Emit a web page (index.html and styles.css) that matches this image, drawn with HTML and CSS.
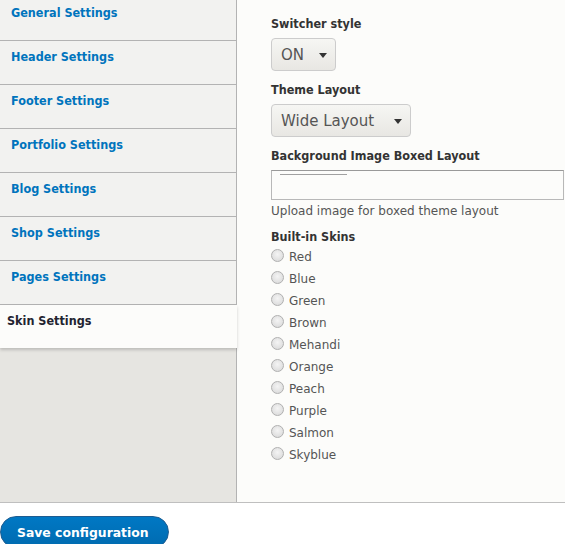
FILE: index.html
```html
<!DOCTYPE html>
<html>
<head>
<meta charset="utf-8">
<link rel="stylesheet" href="styles.css">
</head>
<body>
<div class="vt">
  <ul class="tabs">
    <li class="tab"><a>General Settings</a></li>
    <li class="tab"><a>Header Settings</a></li>
    <li class="tab"><a>Footer Settings</a></li>
    <li class="tab"><a>Portfolio Settings</a></li>
    <li class="tab"><a>Blog Settings</a></li>
    <li class="tab"><a>Shop Settings</a></li>
    <li class="tab"><a>Pages Settings</a></li>
    <li class="tab selected"><a>Skin Settings</a></li>
  </ul>
  <div class="panel">
    <div class="item">
      <label class="lbl">Switcher style</label>
      <div class="select sel-on"><span>ON</span><i class="caret"></i></div>
    </div>
    <div class="item">
      <label class="lbl">Theme Layout</label>
      <div class="select sel-wide"><span>Wide Layout</span><i class="caret"></i></div>
    </div>
    <div class="item">
      <label class="lbl">Background Image Boxed Layout</label>
      <div class="file"><span class="fline"></span></div>
      <div class="desc">Upload image for boxed theme layout</div>
    </div>
    <div class="item">
      <label class="lbl lbl-tight">Built-in Skins</label>
      <ul class="radios">
        <li><span class="radio"></span>Red</li>
        <li><span class="radio"></span>Blue</li>
        <li><span class="radio"></span>Green</li>
        <li><span class="radio"></span>Brown</li>
        <li><span class="radio"></span>Mehandi</li>
        <li><span class="radio"></span>Orange</li>
        <li><span class="radio"></span>Peach</li>
        <li><span class="radio"></span>Purple</li>
        <li><span class="radio"></span>Salmon</li>
        <li><span class="radio"></span>Skyblue</li>
      </ul>
    </div>
  </div>
</div>
<div class="actions">
  <button class="btn">Save configuration</button>
</div>
</body>
</html>
```

FILE: styles.css
```css
html, body {
  margin: 0;
  padding: 0;
  background: #ffffff;
  font-family: "DejaVu Sans", "Liberation Sans", sans-serif;
  overflow: hidden;
}
.vt {
  display: flex;
  margin-top: -3px;
  height: 506px;
  border-bottom: 1px solid #bfbfbf;
  box-sizing: border-box;
}
.tabs {
  list-style: none;
  margin: 0;
  padding: 0;
  width: 236px;
  flex: none;
  background: #e6e5e1;
  border-right: 1px solid #b3b3b3;
}
.tab {
  height: 43px;
  border-bottom: 1px solid #b3b3b3;
  background: #f2f2f0;
  box-sizing: content-box;
}
.tab a {
  display: block;
  padding: 8px 11px 0;
  font-family: "DejaVu Sans Condensed", "DejaVu Sans", sans-serif;
  font-size: 12.5px;
  font-weight: bold;
  line-height: 16px;
  color: #0074bd;
}
.tab.selected {
  background: #fcfcfa;
  border-bottom: none;
  margin-right: -1px;
  position: relative;
  z-index: 1;
  box-shadow: 0 2px 3px rgba(0,0,0,0.18);
}
.tab.selected a {
  color: #222330;
  padding-left: 7px;
}
.panel {
  flex: 1;
  background: #fcfcfa;
  padding: 19px 0 0 34px;
}
.item {
  margin-bottom: 11px;
}
.lbl {
  display: block;
  font-family: "DejaVu Sans Condensed", "DejaVu Sans", sans-serif;
  font-size: 12.5px;
  font-weight: bold;
  color: #333333;
  line-height: 16px;
  margin-bottom: 6px;
}
.lbl-tight {
  margin-bottom: 1px;
}
.select {
  display: inline-flex;
  align-items: center;
  justify-content: space-between;
  box-sizing: border-box;
  height: 33px;
  border: 1px solid #cccccc;
  border-radius: 4px;
  background: linear-gradient(#f6f6f3, #e8e7e3);
  color: #555555;
  font-size: 15px;
  padding: 0 8px 0 9px;
}
.sel-on { width: 65px; }
.sel-wide { width: 140px; }
.caret {
  width: 0;
  height: 0;
  border-left: 4px solid transparent;
  border-right: 4px solid transparent;
  border-top: 5px solid #333;
  margin-top: 2px;
}
.file {
  width: 293px;
  height: 30px;
  box-sizing: border-box;
  border: 1px solid #b8b8b8;
  border-top-color: #999;
  background: #fcfcfa;
  padding: 3px 0 0 8px;
}
.fline {
  display: block;
  width: 67px;
  height: 1px;
  background: #a0a0a0;
}
.desc {
  font-size: 12px;
  color: #555555;
  margin-top: 4px;
  line-height: 14px;
}
.radios {
  list-style: none;
  margin: 0;
  padding: 0;
}
.radios li {
  display: flex;
  align-items: center;
  height: 22px;
  font-size: 12px;
  color: #555555;
}
.radio {
  width: 13px;
  height: 13px;
  border-radius: 50%;
  border: 1px solid #b0b0b0;
  background: radial-gradient(circle at 50% 40%, #f4f4f4, #d6d6d6);
  margin-right: 5px;
  margin-top: -4px;
  box-sizing: border-box;
}
.actions {
  padding-top: 13px;
}
.btn {
  display: block;
  width: 169px;
  height: 32px;
  border: 1px solid #1e5c90;
  border-radius: 20px;
  background: linear-gradient(#0078c4, #006bb0);
  color: #ffffff;
  font-family: "DejaVu Sans", sans-serif;
  font-weight: bold;
  font-size: 12.4px;
  text-align: left;
  padding: 0 0 0 16px;
}
```
